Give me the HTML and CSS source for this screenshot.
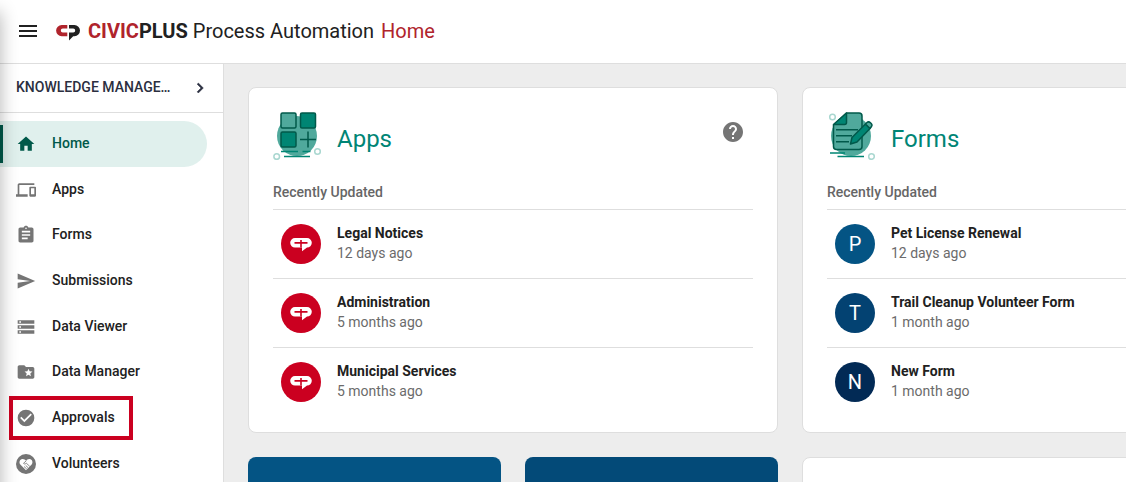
FILE: index.html
```html
<!DOCTYPE html>
<html lang="en">
<head>
<meta charset="utf-8">
<meta name="viewport" content="width=device-width, initial-scale=1">
<title>CivicPlus Process Automation</title>
<link rel="stylesheet" href="styles.css">
</head>
<body>
<svg class="defs" aria-hidden="true">
  <symbol id="cp" viewBox="0 0 22 14"><path d="M5 0h12a4.800 4.800 0 0 1 0 9.600L12 13.200V9.600H5A4.800 4.800 0 0 1 5 0z"/><path class="cross" d="M4.500 3.900h13v1.800h-13zM10.200 2h1.600v7.600h-1.600z"/></symbol>
</svg>
<header class="topbar">
  <button class="menu" type="button" aria-label="Menu"><svg viewBox="0 0 24 24" width="24" height="24"><path d="M3 18h18v-2H3v2zm0-5h18v-2H3v2zm0-7v2h18V6H3z"/></svg></button>
  <svg class="logo" viewBox="0 0 24 16" width="24" height="16" aria-hidden="true"><path class="red" d="M11.300 0H5.700a5.600 5.600 0 0 0 0 11.200h5.600V7.600H6.800a2 2 0 0 1 0-4h4.500z"/><path d="M13 0h5.400a5.600 5.600 0 0 1 0 11.200h-1.200L13 15.500V7.600h4.200a2 2 0 0 0 0-4H13z"/></svg>
  <h1 class="brand"><span class="civic"><span class="red">CIVIC</span>PLUS</span> Process Automation</h1>
  <span class="page red">Home</span>
</header>
<div class="layout">
  <aside class="sidebar">
    <button class="org" type="button"><span class="org-name">KNOWLEDGE MANAGE…</span><svg viewBox="0 0 24 24" width="20" height="20"><path d="M8.600 16.600 13.200 12 8.600 7.400 10 6l6 6-6 6z" stroke="currentColor" stroke-width=".6"/></svg></button>
    <nav class="nav">
      <a class="item active" href="#"><svg viewBox="0 0 24 24"><path d="M10 20v-6h4v6h5v-8h3L12 3 2 12h3v8z"/></svg><span>Home</span></a>
      <a class="item" href="#"><svg viewBox="0 0 24 24"><path d="M4 6h18V4H4c-1.100 0-2 .9-2 2v11H0v3h14v-3H4V6zm19 2h-6c-.55 0-1 .45-1 1v10c0 .55.450 1 1 1h6c.55 0 1-.45 1-1V9c0-.55-.45-1-1-1zm-1 9h-4v-7h4v7z"/></svg><span>Apps</span></a>
      <a class="item" href="#"><svg viewBox="0 0 24 24"><path d="M19 3h-4.180C14.400 1.840 13.300 1 12 1s-2.400.84-2.820 2H5c-1.100 0-2 .9-2 2v14c0 1.100.9 2 2 2h14c1.100 0 2-.9 2-2V5c0-1.100-.9-2-2-2zm-7 0c.55 0 1 .45 1 1s-.45 1-1 1-1-.45-1-1 .45-1 1-1zm2 14H7v-2h7v2zm3-4H7v-2h10v2zm0-4H7V7h10v2z"/></svg><span>Forms</span></a>
      <a class="item" href="#"><svg viewBox="0 0 24 24"><path d="M2 21 23 12 2 3v7l15 2-15 2z"/></svg><span>Submissions</span></a>
      <a class="item" href="#"><svg viewBox="0 0 24 24"><path d="M2 20h20v-4H2v4zm2-3h2v2H4v-2zM2 4v4h20V4H2zm4 3H4V5h2v2zm-4 7h20v-4H2v4zm2-3h2v2H4v-2z"/></svg><span>Data Viewer</span></a>
      <a class="item" href="#"><svg viewBox="0 0 24 24"><path d="M20 6h-8l-2-2H4c-1.100 0-2 .9-2 2v12c0 1.100.9 2 2 2h16c1.100 0 2-.9 2-2V8c0-1.100-.9-2-2-2zm-2.060 11L15 15.280 12.060 17l.78-3.330-2.590-2.240 3.410-.29L15 8l1.340 3.140 3.410.29-2.590 2.240.78 3.330z"/></svg><span>Data Manager</span></a>
      <a class="item marked" href="#"><svg viewBox="0 0 24 24"><path d="M12 2a10 10 0 1 0 0 20 10 10 0 0 0 0-20zm-2 15-5-5 1.410-1.410L10 14.170l7.590-7.590L19 8z"/></svg><span>Approvals</span></a>
      <a class="item" href="#"><svg viewBox="0 0 24 24"><circle cx="12" cy="12" r="12"/><path class="white" d="M12 19.500 5.500 13C3 10.300 4.500 6.300 7.600 6c1.900-.2 3.300.7 4.400 2 1.100-1.300 2.500-2.200 4.400-2 3.100.3 4.600 4.300 2.100 7z"/><path class="hands" d="m12.500 8-3.500 3.200c.8 1.200 2.300.8 3.300-.2l4.200 3.800M14.600 16.500l-3-2.800M12.900 18l-3.300-3"/></svg><span>Volunteers</span></a>
    </nav>
  </aside>
  <main class="content">
    <section class="card">
      <div class="card-head">
        <svg class="art" viewBox="0 0 48 48" width="48" height="48" aria-hidden="true">
          <circle class="disc" cx="24" cy="24" r="20"/>
          <g class="outline"><rect class="light" x="8" y="1" width="15" height="15" rx="1.500"/><rect class="dark" x="27.500" y="1" width="15" height="15" rx="1.500"/><rect class="dark" x="8" y="20" width="15" height="15" rx="1.500"/><path d="M35 19.500v16M27 27.500h16"/></g>
          <path class="rule" d="M8 39.500h17M29.500 39.500h8M11 44.500h26"/>
          <g class="ring"><circle cx="3.700" cy="44.500" r="2.800"/><circle cx="44.500" cy="39.500" r="2.800"/></g>
        </svg>
        <h2>Apps</h2>
        <button class="help" type="button" aria-label="Help"><svg viewBox="0 0 24 24" width="24" height="24"><path d="M12 2C6.480 2 2 6.480 2 12s4.480 10 10 10 10-4.480 10-10S17.520 2 12 2zm1 17h-2v-2h2v2zm2.070-7.750-.9.920C13.450 12.900 13 13.500 13 15h-2v-.5c0-1.100.45-2.100 1.170-2.830l1.240-1.260c.37-.36.590-.86.590-1.410 0-1.100-.9-2-2-2s-2 .9-2 2H8c0-2.210 1.790-4 4-4s4 1.790 4 4c0 .88-.36 1.680-.93 2.250z"/></svg></button>
      </div>
      <h3>Recently Updated</h3>
      <ul class="list">
        <li><span class="avatar crimson"><svg viewBox="0 0 22 14" width="22" height="14"><use href="#cp"/></svg></span><div><strong>Legal Notices</strong><small>12 days ago</small></div></li>
        <li><span class="avatar crimson"><svg viewBox="0 0 22 14" width="22" height="14"><use href="#cp"/></svg></span><div><strong>Administration</strong><small>5 months ago</small></div></li>
        <li><span class="avatar crimson"><svg viewBox="0 0 22 14" width="22" height="14"><use href="#cp"/></svg></span><div><strong>Municipal Services</strong><small>5 months ago</small></div></li>
      </ul>
    </section>
    <section class="card">
      <div class="card-head">
        <svg class="art" viewBox="-2 0 48 48" width="48" height="48" aria-hidden="true">
          <circle class="disc" cx="22" cy="24" r="20"/>
          <g class="outline"><path class="light" d="M17.500 1H30q3 0 3 3V34.500q0 3-3 3H7.500q-3 0-3-3V13z"/><path class="dark" d="M17.500 1v9.500q0 2-2 2h-11z"/><path d="M7 17.700h22M7 23.700h16M7 29.700h13"/><path class="dark" d="m21.500 32 1.500-6.500L36.500 12l4.500 4.500-13 13.500z"/><path class="light" d="m36.500 12 1.500-1.500c2-2 6.500 2 4.500 4L41 16.500z"/></g>
          <path class="rule" d="M1 41h15M8.500 44.500H35"/>
          <g class="ring"><circle cx="3.500" cy="5" r="2.800"/><circle cx="42.500" cy="44.500" r="2.800"/></g>
        </svg>
        <h2>Forms</h2>
      </div>
      <h3>Recently Updated</h3>
      <ul class="list">
        <li><span class="avatar blue">P</span><div><strong>Pet License Renewal</strong><small>12 days ago</small></div></li>
        <li><span class="avatar navy">T</span><div><strong>Trail Cleanup Volunteer Form</strong><small>1 month ago</small></div></li>
        <li><span class="avatar midnight">N</span><div><strong>New Form</strong><small>1 month ago</small></div></li>
      </ul>
    </section>
    <div class="tiles"><div class="tile blue"></div><div class="tile navy-tile"></div></div>
    <section class="card"></section>
  </main>
</div>
</body>
</html>
```
FILE: styles.css
```css
* { box-sizing: border-box; }
body {
  margin: 0;
  height: 100vh;
  display: flex;
  flex-direction: column;
  overflow: hidden;
  font: 14px/20px Roboto, sans-serif;
  color: #212121;
  background: #ededed;
}
/* soft shadow along the left window edge */
body::after {
  content: "";
  position: fixed;
  inset: 12px auto -20px -20px;
  width: 20px;
  box-shadow: 0 0 18px rgba(0, 0, 0, 0.3);
  pointer-events: none;
}
button { border: 0; padding: 0; background: none; font: inherit; color: inherit; cursor: pointer; }
svg { display: block; fill: currentColor; flex: none; }
h1, h2, h3, ul { margin: 0; padding: 0; font-weight: 400; }
.defs { position: absolute; width: 0; height: 0; }
.red { color: #b0242c; fill: #b0242c; }

.topbar {
  flex: none;
  display: flex;
  align-items: center;
  height: 64px;
  padding: 0 16px 2px;
  background: #fff;
  border-bottom: 1px solid #dedede;
  font-size: 20px;
  line-height: 24px;
}
.logo { margin: 4px 8px 0 16px; }
.brand { font-size: 20px; }
.civic { font-weight: 700; }
.page { margin-left: 7px; }

.layout { flex: 1; display: flex; min-height: 0; }
.sidebar {
  flex: none;
  width: 224px;
  overflow: hidden;
  background: #fff;
  border-right: 1px solid #dedede;
}
.org {
  display: flex;
  align-items: center;
  justify-content: space-between;
  width: 100%;
  height: 49px;
  padding: 0 13px 2px 16px;
  border-bottom: 1px solid #dedede;
  color: #2b2f40;
  font-weight: 500;
}
.org svg { margin-top: 2px; }
.org-name { white-space: nowrap; }
.nav { padding-top: 8px; }
.item {
  position: relative;
  display: flex;
  align-items: center;
  gap: 16px;
  height: 46px;
  margin-right: 16px;
  padding: 0 16px;
  border-radius: 0 23px 23px 0;
  color: #212121;
  font-weight: 500;
  text-decoration: none;
}
.item:nth-child(3n + 2) { height: 45px; }
.item span { padding-bottom: 2px; }
.item svg { width: 20px; height: 20px; color: #757575; }
.item .white { fill: #fff; }
.item .hands { fill: none; stroke: #757575; stroke-width: 1; }
.active, .active svg { color: #00594a; }
.active { background: #e0f0ed; }
.active::before { content: ""; position: absolute; inset: 4px auto 4px 0; width: 3px; background: #00594a; }
.marked::before {
  content: "";
  position: absolute;
  inset: 1px 74px 1px 9px;
  border: 4px solid #cb0020;
}

.content {
  flex: 1;
  min-width: 0;
  overflow: hidden;
  display: grid;
  grid-template-columns: repeat(2, minmax(530px, 1fr));
  grid-template-rows: auto 200px;
  align-content: start;
  gap: 24px;
  padding: 23px 24px;
}
.card { padding: 24px 24px 16px; background: #fff; border: 1px solid #dedede; border-radius: 8px; }
.card-head { display: flex; align-items: center; gap: 16px; height: 54px; }
.card-head h2 { flex: 1; font-size: 24px; line-height: 32px; color: #008575; }
.art { align-self: flex-start; }
.help { align-self: flex-start; margin: 8px 8px 0 0; color: #757575; }
.card h3 { padding: 16px 0 7px; font-size: 14px; font-weight: 500; color: #666; border-bottom: 1px solid #dedede; }
.disc, .light { fill: #50a99c; }
.dark { fill: #008573; }
.outline { stroke: #00594a; stroke-width: 1.5; stroke-linejoin: round; fill: none; }
.rule { stroke: #008573; stroke-width: 1.5; fill: none; }
.ring { stroke: #a9d7d0; stroke-width: 1.5; fill: #fff; }

.list { list-style: none; }
.list li { display: flex; align-items: center; gap: 16px; padding: 14px 8px; }
.list li + li { border-top: 1px solid #dedede; }
.list div { padding-bottom: 2px; }
.list strong, .list small { display: block; font-size: 14px; line-height: 20px; }
.list strong { font-weight: 700; }
.list small { color: #6b6b6b; }
.list li { height: 68px; }
.list li + li { height: 69px; }
.avatar {
  display: flex;
  align-items: center;
  justify-content: center;
  width: 40px;
  height: 40px;
  border-radius: 50%;
  color: #fff;
  font-size: 20px;
}
.avatar svg { margin-top: 2px; }
.cross { fill: #cb0020; }
.crimson { background: #cb0020; }
.blue { background: #045484; }
.navy { background: #034272; }
.midnight { background: #022a55; }
.navy-tile { background: #034a78; }
.tiles { display: grid; grid-template-columns: 1fr 1fr; gap: 24px; }
.tile { border-radius: 8px; }
```
